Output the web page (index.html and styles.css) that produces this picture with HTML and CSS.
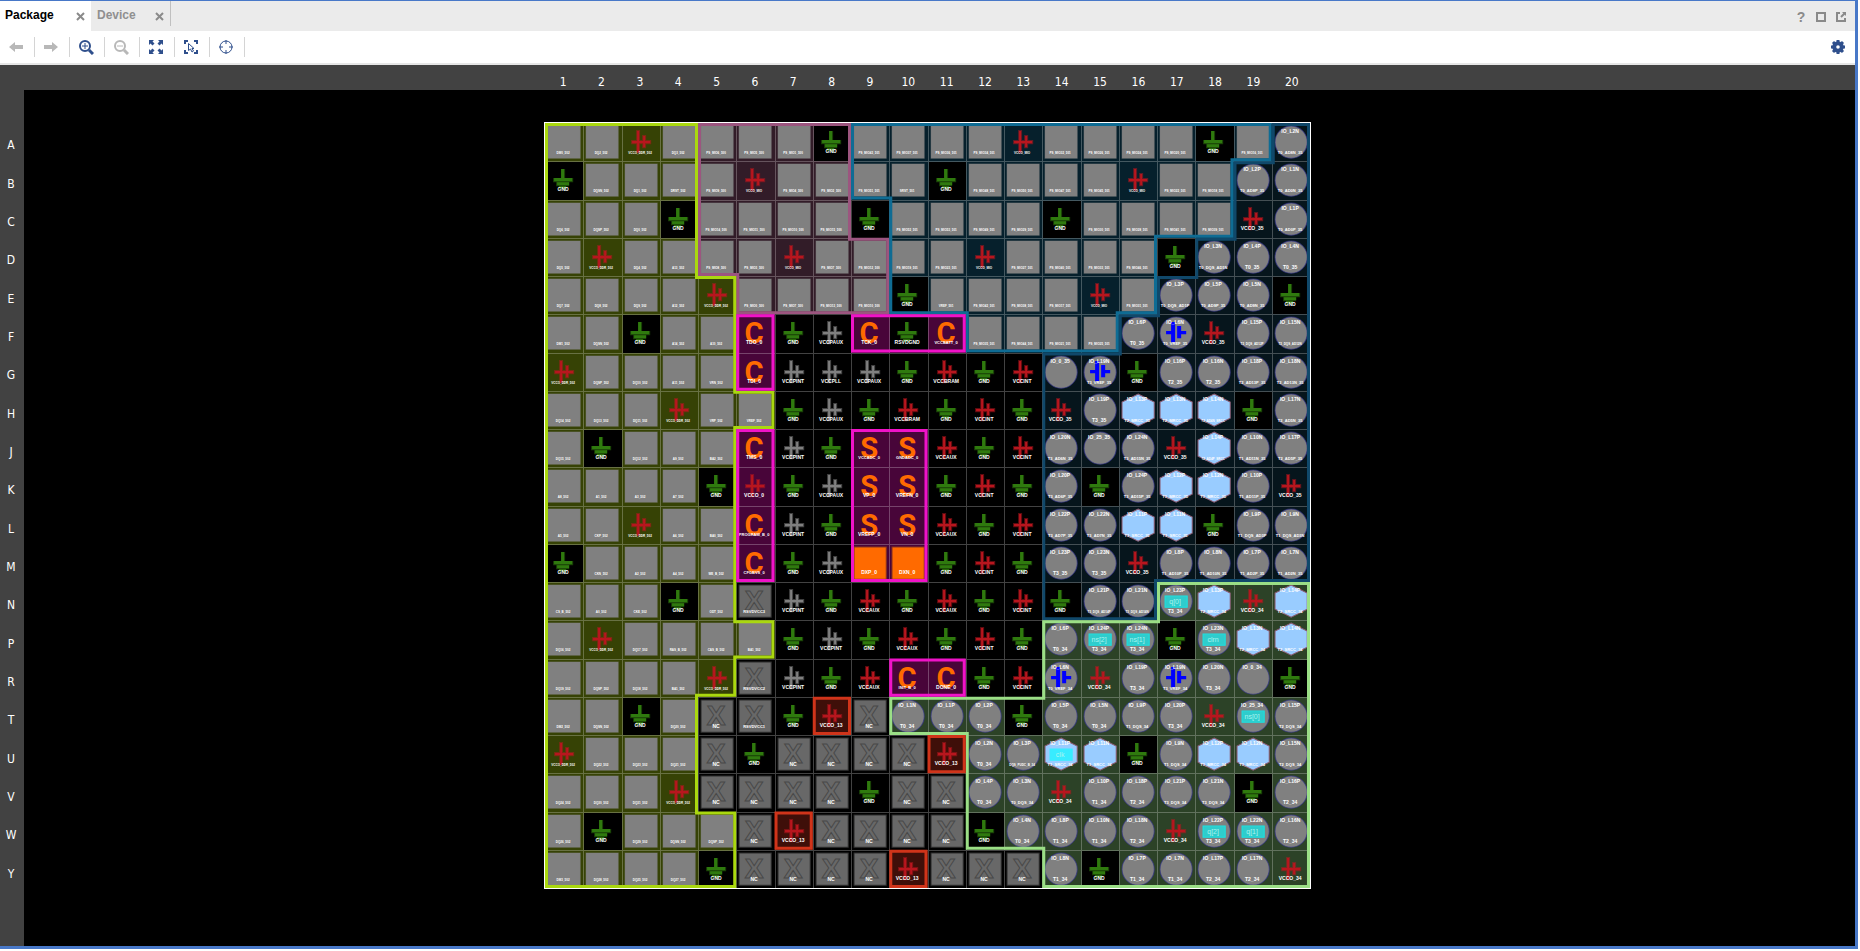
FILE: index.html
```html
<!DOCTYPE html>
<html lang="en">
<head>
<meta charset="utf-8">
<title>Package</title>
<link rel="stylesheet" href="styles.css">
</head>
<body>
<svg class="defs" aria-hidden="true">
  <symbol id="gnd" viewBox="0 0 38 38">
    <path class="rim" d="M16 8h4v9h8v4h-4v4h-3v3h-7v-3h-3v-4h-3v-4h8z"/>
    <path class="ink" d="M16 8h3v9h8v3h-18v-3h7zM12 21h12v3h-12zM14 25h7v2h-7z"/>
  </symbol>
  <symbol id="vcc" viewBox="0 0 38 38">
    <path class="rim" d="M14 7h4v10h2v-5h4v5h5v4h-5v4h-4v-4h-2v9h-4v-9h-5v-4h5z"/>
    <path class="ink" d="M15 8h2v21h-2zM10 18h5v2h-5zM17 18h4v2h-4zM21 13h2v11h-2zM23 18h5v2h-5z"/>
  </symbol>
  <symbol id="vref" viewBox="0 0 38 38">
    <path class="ink" d="M14 8h4v20h-4zM9 17h5v3h-5zM20 12h4v12h-4zM24 17h5v3h-5z"/>
  </symbol>
</svg>

<main class="window">
  <header class="tabs">
    <div class="tab tab-active"><button class="tab-name" type="button">Package</button><button class="close" type="button" aria-label="Close Package"><svg width="9" height="9" viewBox="0 0 9 9"><path d="M1 1l7 7M8 1l-7 7"/></svg></button></div>
    <div class="tab"><button class="tab-name" type="button">Device</button><button class="close" type="button" aria-label="Close Device"><svg width="9" height="9" viewBox="0 0 9 9"><path d="M1 1l7 7M8 1l-7 7"/></svg></button></div>
    <div class="window-actions">
      <button type="button" class="help">?</button>
      <button type="button" aria-label="Maximize"><svg width="12" height="12" viewBox="0 0 12 12"><path d="M2 2h8v8H2z"/></svg></button>
      <button type="button" aria-label="Float"><svg width="12" height="12" viewBox="0 0 12 12"><path d="M5 2H2v8h8V7M6 6l4-4"/><path class="tip" d="M7 1h4v4z"/></svg></button>
    </div>
  </header>

  <nav class="toolbar" aria-label="Package tools">
    <button type="button" aria-label="Back" disabled><svg width="16" height="16" viewBox="0 0 16 16"><path class="solid" d="M1 8l6-5v3h8v4H7v3z"/></svg></button>
    <button type="button" aria-label="Forward" disabled><svg width="16" height="16" viewBox="0 0 16 16"><path class="solid" d="M15 8L9 3v3H1v4h8v3z"/></svg></button>
    <button type="button" aria-label="Zoom in"><svg width="16" height="16" viewBox="0 0 16 16"><circle cx="7" cy="7" r="5"/><path class="fine" d="M7 4v6M4 7h6"/><path class="thick" d="M11 11l4 4"/></svg></button>
    <button type="button" aria-label="Zoom out" disabled><svg width="16" height="16" viewBox="0 0 16 16"><circle cx="7" cy="7" r="5"/><path class="fine" d="M4 7h6"/><path class="thick" d="M11 11l4 4"/></svg></button>
    <button type="button" aria-label="Zoom fit"><svg width="16" height="16" viewBox="0 0 16 16"><path class="solid" d="M1 1h5L4.500 2.500l2 2-2 2-2-2L1 6zM15 1v5l-1.500-1.500-2 2-2-2 2-2L10 1zM1 15v-5l1.500 1.500 2-2 2 2-2 2L6 15zM15 15h-5l1.500-1.500-2-2 2-2 2 2L15 10z"/></svg></button>
    <button type="button" aria-label="Zoom to selection"><svg width="16" height="16" viewBox="0 0 16 16"><path d="M5 2H2v3M11 2h3v3M2 11v3h3M14 11v3h-3"/><path class="fine" d="M5.500 4.500v7l2-1.500 1.500 3 1.500-1-1.500-2.500h2z"/></svg></button>
    <button type="button" aria-label="Autofit selection"><svg width="16" height="16" viewBox="0 0 16 16"><circle class="fine" cx="8" cy="8" r="6"/><path class="fine" d="M8 1v4M8 11v4M1 8h4M11 8h4"/></svg></button>
    <button type="button" class="settings" aria-label="Settings"><svg width="16" height="16" viewBox="0 0 16 16"><circle class="cog" cx="8" cy="8" r="3.800"/><path class="teeth" d="M8 1v2M8 13v2M1 8h2M13 8h2M3 3l1.500 1.500M11.500 11.500L13 13M13 3l-1.500 1.500M4.500 11.500L3 13"/></svg></button>
  </nav>

  <section class="viewer" aria-label="Package pins">
    <div class="column-ruler" id="columns"></div>
    <div class="row-ruler" id="rows"></div>
    <div class="package" id="package"></div>
  </section>
</main>
<script src="package.js"></script>
</body>
</html>
```
FILE: styles.css
```css
:root {
  --package-size: calc(100vh - 184px);
  --blue: #4878c8;
  --icon: #2f4f8c;
  --ruler: #424242;
}

* { box-sizing: border-box; }

body {
  margin: 0;
  background: #fff;
  font-family: "Liberation Sans", Arial, sans-serif;
  font-size: 12px;
}

button {
  margin: 0;
  padding: 0;
  border: 0;
  background: none;
  font: inherit;
  color: inherit;
}

.defs { position: absolute; width: 0; height: 0; }

.window {
  display: flex;
  flex-direction: column;
  height: calc(100vh - 2px);
  margin-right: 2px;
  border: solid var(--blue);
  border-width: 1px 3px 3px 0;
}

/* Tabs */
.tabs {
  display: flex;
  height: 30px;
  background: #ebebeb;
}
.tab {
  display: flex;
  align-items: center;
  justify-content: space-between;
  width: 80px;
  height: 25px;
  padding: 3px 6px 0;
  border-right: 1px solid #c0c0c0;
  color: #909090;
  font-weight: bold;
}
.tab-active {
  width: 91px;
  height: 30px;
  padding: 0 6px 2px 5px;
  border: 0;
  background: #fff;
  color: #000;
}
.close { padding-top: 3px; line-height: 0; }
.close svg { fill: none; stroke: #8a8a8a; stroke-width: 2; }
.window-actions {
  display: flex;
  align-items: center;
  gap: 8px;
  margin-left: auto;
  padding: 2px 8px 0 0;
  color: #8a8a8a;
}
.window-actions svg { display: block; fill: none; stroke: #8a8a8a; stroke-width: 2; }
.window-actions .tip { fill: #8a8a8a; stroke: none; }
.help { width: 12px; font-size: 14px; font-weight: bold; }

/* Toolbar */
.toolbar {
  display: flex;
  align-items: center;
  height: 34px;
  border-bottom: 2px solid #e6e6e6;
}
.toolbar button {
  display: flex;
  align-items: center;
  justify-content: center;
  width: 35px;
  height: 20px;
  padding-right: 2px;
  border-right: 1px solid #d4d4d4;
}
.toolbar svg { fill: none; stroke: var(--icon); stroke-width: 2; }
.toolbar .solid { fill: var(--icon); stroke: none; }
.toolbar .thick { stroke-width: 3; }
.toolbar .fine { stroke-width: 1; }
.toolbar .teeth { stroke-width: 3; }
.toolbar .cog { stroke-width: 4; }
.toolbar button:disabled svg { stroke: #b8b8b8; }
.toolbar button:disabled .solid { fill: #b8b8b8; }
.toolbar .settings { margin-left: auto; padding: 0; border: 0; }

/* Viewer */
.viewer {
  flex: 1;
  display: grid;
  grid-template: 25px 1fr / 24px 1fr 24px;
  min-height: 0;
  background: #000;
  color: #fff;
  font-family: "DejaVu Sans Condensed", "DejaVu Sans", sans-serif;
}
.column-ruler {
  grid-area: 1 / 1 / 2 / 4;
  display: grid;
  grid-template-columns: repeat(20, 1fr);
  justify-items: center;
  padding: 8px calc((100% - var(--package-size)) / 2) 0;
  background: var(--ruler);
  line-height: 18px;
}
.row-ruler {
  grid-area: 2 / 1;
  display: grid;
  grid-template-rows: repeat(20, 1fr);
  align-items: center;
  justify-items: center;
  padding: 36px 2px 53px 0;
  background: var(--ruler);
}
.package {
  grid-area: 2 / 2;
  justify-self: center;
  position: relative;
  display: grid;
  grid-template: repeat(20, 1fr) / repeat(20, 1fr);
  width: var(--package-size);
  height: var(--package-size);
  margin-top: 32px;
  border: 1px solid #fff;
}

/* Pins */
.pin {
  display: block;
  width: 100%;
  height: 100%;
  background: #000;
  box-shadow: inset 1px 1px 0 #424242;
}
.bank-y { background: #364205; box-shadow: inset 1px 1px 0 #687143; }
.bank-k { background: #321c28; box-shadow: inset 1px 1px 0 #66545d; }
.bank-b { background: #06202c; box-shadow: inset 1px 1px 0 #445860; }
.bank-s { background: #06151c; box-shadow: inset 1px 1px 0 #444f54; }
.bank-v { background: #2c4227; box-shadow: inset 1px 1px 0 #61715d; }
.bank-m { background: #480539; box-shadow: inset 1px 1px 0 #76446b; }
.bank-r { background: #3f0f09; }
.pin.gnd { background: #000; }

.pin text {
  fill: #fff;
  font-family: "Liberation Sans", Arial, sans-serif;
  font-weight: bold;
  text-anchor: middle;
}
.pin .name { font-size: 5px; }
.pin .name-long { font-size: 4px; }
.pin .name-tiny { font-size: 3px; }
.pin .letter { fill: #ff6a00; font-family: Roboto, sans-serif; font-size: 29px; }
.pin .cross { fill: none; stroke: #484848; font-size: 28px; font-weight: bold; }
.pin .net { fill: #a8f4f0; font-size: 7px; font-weight: normal; }

.use-gnd { fill: #2f7a0e; }
.use-red { fill: #b8161e; }
.use-gray { fill: #808080; }
.use-blue { fill: #0000ff; }
.rim { opacity: 0.5; }

.pad { fill: #808080; stroke: #808080; stroke-opacity: 0.5; }
.pad-nc { fill: #686868; stroke: #2c2c2c; }
.pad-dx { fill: #ff6a00; stroke: #8a3420; }
.ball { fill: #808080; stroke: #34348c; stroke-opacity: 0.7; }
.clock { fill: #99ccff; stroke: #8a5a70; }
.port { fill: #2fcccc; stroke: #18e4e4; }
.port-clock { fill: #38ecff; stroke: #38ecff; }

/* Bank outlines drawn over the pins */
.outlines {
  position: absolute;
  inset: 0;
  width: 100%;
  height: 100%;
  pointer-events: none;
}
.outlines path { fill: none; stroke-width: 6; }
.line-y { stroke: #aad80f; }
.line-k { stroke: #9c557f; }
.line-b { stroke: #0f6c94; }
.line-s { stroke: #10486a; }
.line-v { stroke: #9bdf86; }
.line-m { stroke: #f013c8; }
.line-r { stroke: #d0341a; }
```
FILE: package.js
```js
// Pins per row. Kinds: p pad, g ground, r supply, w processor supply, C config,
// S sensor, D diode, X unconnected, o user I/O, b reference, h clock I/O,
// t assigned I/O, k assigned clock. Fields: kind:label:top label:net.
const pins = {
  A: 'p:DM0_502 p:DQ2_502 r p:DQ3_502 p:6 p:5 p:1 g p:43 p:37 p:36 p:34 r p:32 p:26 p:24 p:20 g p:16 o:T0_AD8N_35:L2N',
  B: 'g p:DQSN_502 p:DQ1_502 p:DRST_502 p:9 r p:4 p:2 p:51 p:SRST_501 g p:48 p:50 p:47 p:45 r p:22 p:18 o:T0_AD8P_35:L2P o:T0_AD0N_35:L1N',
  C: 'p:DQ6_502 p:DQSP_502 p:DQ0_502 g p:14 p:11 p:10 p:15 g p:52 p:53 p:49 p:29 g p:30 p:28 p:41 p:39 r o:T0_AD0P_35:L1P',
  D: 'p:DQ5_502 r p:DQ4_502 p:A13_502 p:8 p:3 r p:7 p:12 p:19 p:23 r p:27 p:40 p:33 p:46 g o:T0_DQS_AD1N:L3N o:T0_35:L4P o:T0_35:L4N',
  E: 'p:DQ7_502 p:DQ8_502 p:DQ9_502 p:A12_502 r p:0 p:7 p:13 p:10 g p:VREF_501 p:42 p:38 p:17 r p:31 o:T0_DQS_AD1P:L3P o:T0_AD9P_35:L5P o:T0_AD9N_35:L5N g',
  F: 'p:DM1_502 p:DQSN_502 g p:A14_502 p:A10_502 C:TDO_0 g w:VCCPAUX C:TCK_0 g:RSVDGND C:VCCBATT_0 p:35 p:44 p:21 p:25 o:T0_35:L6P b:T0_VREF_35:L6N r o:T2_DQS_AD12P:L15P o:T2_DQS_AD12N:L15N',
  G: 'r p:DQSP_502 p:DQ10_502 p:A11_502 p:VRN_502 C:TDI_0 w:VCCPINT w:VCCPLL w:VCCPAUX g r:VCCBRAM g r o::0_35 b:T3_VREF_35:L19N g o:T2_35:L16P o:T2_35:L16N o:T2_AD13P_35:L18P o:T2_AD13N_35:L18N',
  H: 'p:DQ14_502 p:DQ13_502 p:DQ11_502 r p:VRP_502 p:VREF_502 g w:VCCPAUX g r:VCCBRAM g r g r o:T3_35:L19P h:T2_MRCC_35:L13P h:T2_MRCC_35:L13N h:T2_AD4N_SRCC:L14N g o:T2_AD5N_35:L17N',
  J: 'p:DQ15_502 g p:DQ12_502 p:A9_502 p:BA2_502 C:TMS_0 w:VCCPINT g S:VCCADC_0 S:GNDADC_0 r:VCCAUX g r o:T3_AD6N_35:L20N o::25_35 o:T3_AD15N_35:L24N r h:T2_AD4P_SRCC:L14P o:T1_AD11N_35:L10N o:T2_AD5P_35:L17P',
  K: 'p:A8_502 p:A1_502 p:A3_502 p:A7_502 g r:VCCO_0 g w:VCCPAUX S:VP_0 S:VREFN_0 g r g o:T3_AD6P_35:L20P g o:T3_AD15P_35:L24P h:T1_MRCC_35:L12P h:T1_MRCC_35:L12N o:T1_AD11P_35:L10P r',
  L: 'p:A5_502 p:CKP_502 r p:A6_502 p:BA0_502 C:PROGRAM_B_0 w:VCCPINT g S:VREFP_0 S:VN_0 r:VCCAUX g r o:T3_AD7P_35:L22P o:T3_AD7N_35:L22N h:T1_SRCC_35:L11P h:T1_SRCC_35:L11N g o:T1_DQS_AD3P:L9P o:T1_DQS_AD3N:L9N',
  M: 'g p:CKN_502 p:A2_502 p:A4_502 p:WE_B_502 C:CFGBVS_0 g w:VCCPAUX D:DXP_0 D:DXN_0 g r g o:T3_35:L23P o:T3_35:L23N r o:T1_AD10P_35:L8P o:T1_AD10N_35:L8N o:T1_AD2P_35:L7P o:T1_AD2N_35:L7N',
  N: 'p:CS_B_502 p:A0_502 p:CKE_502 g p:ODT_502 X:RSVDVCC3 w:VCCPINT g r:VCCAUX g r:VCCAUX g r g o:T3_DQS_AD14P:L21P o:T3_DQS_AD14N:L21N t:T3_34:L23P:q[0] h:T2_MRCC_34:L13P r h:T2_SRCC_34:L14P',
  P: 'p:DQ16_502 r p:DQ17_502 p:RAS_B_502 p:CAS_B_502 p:BA1_502 g w:VCCPINT g r:VCCAUX g r g o:T0_34:L6P t:T3_34:L24P:ns[2] t:T3_34:L24N:ns[1] g t:T3_34:L23N:clrn h:T2_MRCC_34:L13N h:T2_SRCC_34:L14N',
  R: 'p:DQ19_502 p:DQSP_502 p:DQ18_502 p:BA1_502 r X:RSVDVCC2 w:VCCPINT g r:VCCAUX C:INIT_B_0 C:DONE_0 g r b:T0_VREF_34:L6N r o:T3_34:L19P b:T3_VREF_34:L19N o:T3_34:L20N o::0_34 g',
  T: 'p:DM2_502 p:DQSN_502 g p:DQ20_502 X:NC X:RSVDVCC1 g r X:NC o:T0_34:L1N o:T0_34:L1P o:T0_34:L2P g o:T0_34:L5P o:T0_34:L5N o:T1_DQS_34:L9P o:T3_34:L20P r t::25_34:ns[0] o:T2_DQS_34:L15P',
  U: 'r p:DQ22_502 p:DQ23_502 p:DQ21_502 X:NC g X:NC X:NC X:NC X:NC r o:T0_34:L2N o:DQS_PUDC_B_34:L3P k:T1_SRCC_34:L11P:clk h:T1_SRCC_34:L11N g o:T1_DQS_34:L9N h:T1_MRCC_34:L12P h:T1_MRCC_34:L12N o:T2_DQS_34:L15N',
  V: 'p:DQ24_502 p:DQ30_502 p:DQ31_502 r X:NC X:NC X:NC X:NC g X:NC X:NC o:T0_34:L4P o:T0_DQS_34:L3N r o:T1_34:L10P o:T2_34:L18P o:T3_DQS_34:L21P o:T3_DQS_34:L21N g o:T2_34:L16P',
  W: 'p:DQ26_502 g p:DQ29_502 p:DQSN_502 p:DQSP_502 X:NC r X:NC X:NC X:NC X:NC g o:T0_34:L4N o:T1_34:L8P o:T1_34:L10N o:T2_34:L18N r t:T3_34:L22P:q[2] t:T3_34:L22N:q[1] o:T2_34:L16N',
  Y: 'p:DM3_502 p:DQ28_502 p:DQ25_502 p:DQ27_502 g X:NC X:NC X:NC X:NC r X:NC X:NC X:NC o:T1_34:L8N g o:T1_34:L7P o:T1_34:L7N o:T2_34:L17P o:T2_34:L17N r'
};

// Bank of each pin, one letter per column.
const banks = {
  A: 'yyyykkkkbbbbbbbbbbbs',
  B: 'yyyykkkkbbbbbbbbbbss',
  C: 'yyyykkkk.bbbbbbbbbss',
  D: 'yyyykkkkkbbbbbbb.sss',
  E: 'yyyyykkkkbbbbbbbssss',
  F: 'yyyyym..mmmbbbbsssss',
  G: 'yyyyym.......sssssss',
  H: 'yyyyyy.......sssssss',
  J: 'yyyyym..mm...sssssss',
  K: 'yyyyym..mm...sssssss',
  L: 'yyyyym..mm...sssssss',
  M: 'yyyyym..mm...sssssss',
  N: 'yyyyy........sssvvvv',
  P: 'yyyyyy.......vvvvvvv',
  R: 'yyyyy....mm..vvvvvvv',
  T: 'yyyy...r.vvvvvvvvvvv',
  U: 'yyyy......rvvvvvvvvv',
  V: 'yyyy.......vvvvvvvvv',
  W: 'yyyyy.r....vvvvvvvvv',
  Y: 'yyyyy....r...vvvvvvv'
};

// Bank outlines, in pin units.
const outlines = [
  ['s', 'M19 0H20V12H16V13H13V6H15V5H16V4H17V3H18V1H19z'],
  ['k', 'M4 0H8V3H9V5H5V4H4z'],
  ['b', 'M8 0H19V1H18V3H16V5H15V6H11V5H9V2H8z'],
  ['y', 'M0 0H4V4H5V7H6V8H5V13H6V14H5V15H4V18H5V20H0z'],
  ['v', 'M16 12H20V20H13V19H11V16H9V15H13V13H16z'],
  ['m', 'M5 5H6V7H5z'], ['m', 'M5 8H6V12H5z'], ['m', 'M8 5H11V6H8z'],
  ['m', 'M8 8H10V12H8z'], ['m', 'M9 14H11V15H9z'],
  ['r', 'M7 15H8V16H7z'], ['r', 'M10 16H11V17H10z'],
  ['r', 'M6 18H7V19H6z'], ['r', 'M9 19H10V20H9z']
];

const supplyNames = {
  y: 'VCCO_DDR_502', k: 'VCCO_MIO', b: 'VCCO_MIO', s: 'VCCO_35',
  v: 'VCCO_34', r: 'VCCO_13', m: 'VCCO_0', '.': 'VCCINT'
};

function text(value, y, size) {
  return value ? `<text class="${size}" x="18" y="${y}">${value}</text>` : '';
}

function symbol(id, paint) {
  return `<use href="#${id}" class="${paint}" width="38" height="38"/>`;
}

function sizeFor(value) {
  if (value.length > 11) return 'name-tiny';
  return value.length > 7 ? 'name-long' : 'name';
}

function draw(token, bank) {
  const [kind, label = '', top = '', net = ''] = token.split(':');
  const hexagon = '<path class="clock" d="M19 3l16 8v16l-16 8-16-8V11z"/>';
  const ball = '<circle class="ball" cx="19" cy="19" r="16"/>';
  const names = text(top && 'IO_' + top, 10, 'name') + text(label, 31, sizeFor(label));

  switch (kind) {
    case 'g': return symbol('gnd', 'use-gnd') + text(label || 'GND', 30, 'name');
    case 'r': {
      const name = label || supplyNames[bank];
      const tiny = 'ykb'.includes(bank);
      return symbol('vcc', 'use-red') + text(name, tiny ? 31 : 30, tiny ? 'name-tiny' : 'name');
    }
    case 'w': return symbol('vcc', 'use-gray') + text(label, 30, 'name');
    case 'C':
    case 'S': return text(kind, 29, 'letter') + text(label, 30, sizeFor(label));
    case 'D': return '<path class="pad-dx" d="M3 3h32v32H3z"/>' + text(label, 30, 'name');
    case 'X': return '<path class="pad-nc" d="M3 3h32v32H3z"/>' + text('X', 28, 'cross') + text(label, 31, sizeFor(label));
    case 'p': {
      const mio = /^\d+$/.test(label);
      const name = mio ? `PS_MIO${label}_${bank === 'k' ? 500 : 501}` : label;
      return '<path class="pad" d="M3 3h32v32H3z"/>' + text(name, 31, 'name-tiny');
    }
    case 'o': return ball + names;
    case 'b': return ball + symbol('vref', 'use-blue') + names;
    case 'h': return hexagon + names;
    case 't': return ball + names + '<path class="port" d="M8 14h22v11H8z"/>' + text(net, 22, 'net');
    case 'k': return hexagon + names + '<path class="port-clock" d="M8 14h22v11H8z"/>' + text(net, 22, 'net');
  }
  return '';
}

const rows = Object.keys(pins);
const cells = rows.flatMap(row => pins[row].split(' ').map((token, column) => {
  const bank = banks[row][column];
  const classes = ['pin'];
  if (bank !== '.') classes.push('bank-' + bank);
  if (token[0] === 'g') classes.push('gnd');
  return `<svg class="${classes.join(' ')}" viewBox="0 0 38 38">${draw(token, bank)}</svg>`;
}));

const scale = 38;
const lines = outlines.map(([bank, path], index) => {
  const d = path.replace(/\d+/g, n => n * scale);
  return `<clipPath id="bank${index}"><path d="${d}"/></clipPath>` +
    `<path class="line-${bank}" clip-path="url(#bank${index})" d="${d}"/>`;
});

document.getElementById('package').innerHTML = cells.join('') +
  `<svg class="outlines" viewBox="0 0 760 760">${lines.join('')}</svg>`;
document.getElementById('columns').innerHTML =
  rows.map((row, index) => `<span>${index + 1}</span>`).join('');
document.getElementById('rows').innerHTML = rows.map(row => `<span>${row}</span>`).join('');
```
